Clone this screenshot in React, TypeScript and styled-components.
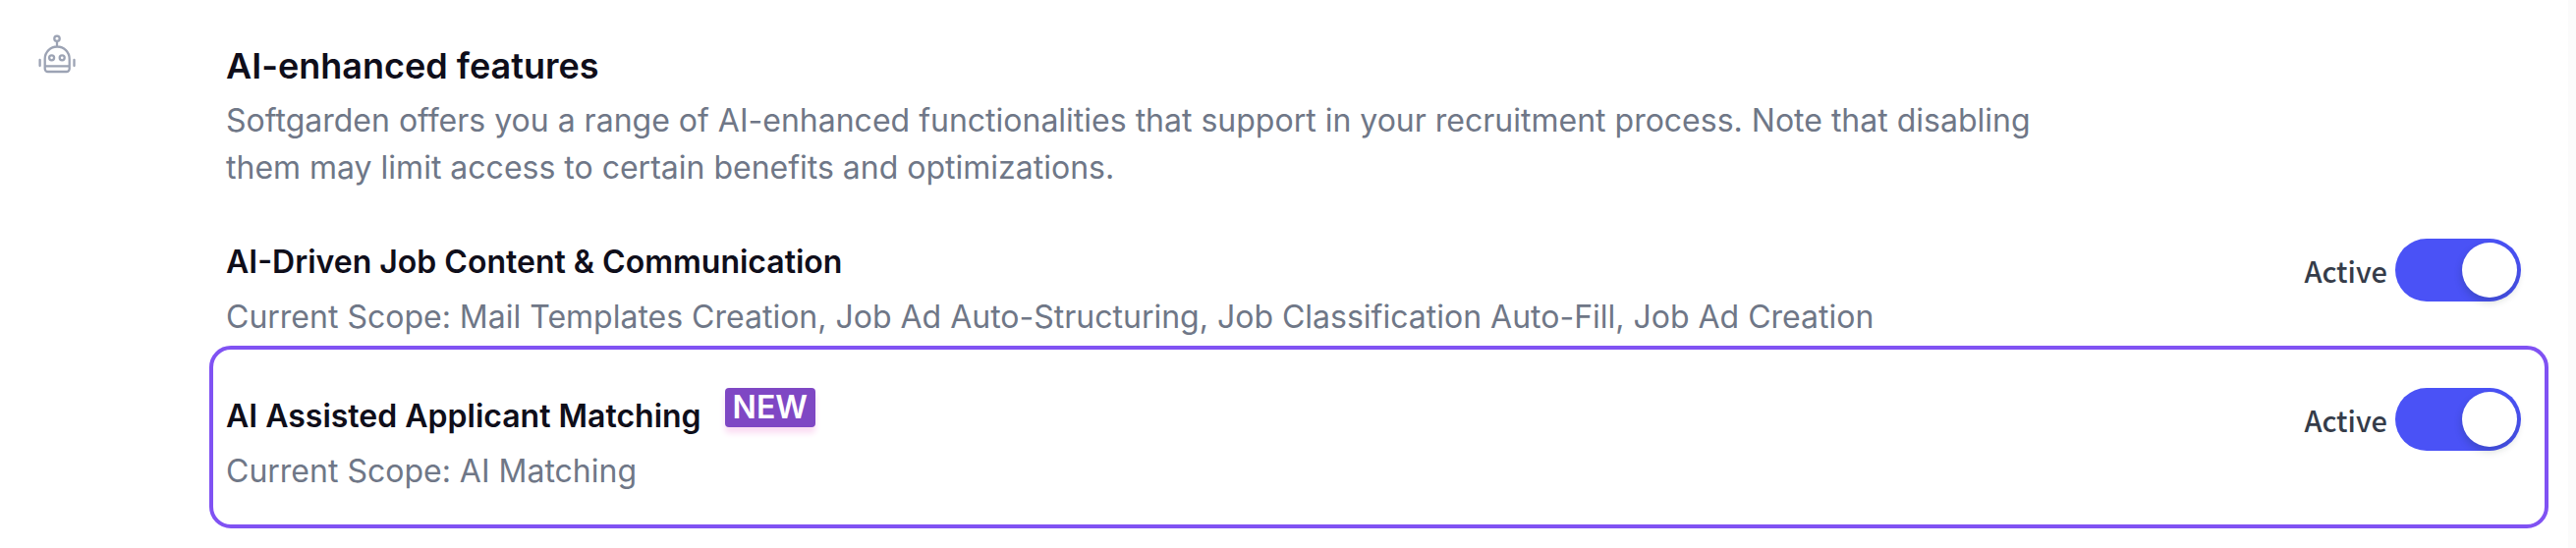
import React, { useId, useState } from "react";
import styled, { createGlobalStyle } from "styled-components";

const GlobalStyle = createGlobalStyle`
  *, *::before, *::after { box-sizing: border-box; }
  body {
    margin: 0;
    background: #ffffff;
    font-family: Inter, "Liberation Sans", sans-serif;
    font-optical-sizing: none;
    font-size: 32px;
    line-height: 48px;
  }
  h2, h3, p { margin: 0; }
`;

const Panel = styled.section`
  display: flex;
  align-items: flex-start;
  min-height: 100vh;
  padding: 32px 20px 20px 36px;
  border-right: 8px solid #fbfbfb;
`;

const IconColumn = styled.div`
  flex: 0 0 177px;
`;

const RobotSvg = styled.svg`
  display: block;
  width: 44px;
  height: 44px;
`;

const Content = styled.div`
  flex: 1;
  min-width: 0;
`;

const Intro = styled.header`
  max-width: 1900px;
  padding: 7px 0 0 17px;
`;

const Heading = styled.h2`
  font-size: 36px;
  font-weight: 600;
  line-height: 56px;
  color: #0f0e1a;
`;

const Description = styled.p`
  margin-top: 4px;
  color: #6f7787;
`;

const Feature = styled.div<{ $highlighted?: boolean }>`
  display: flex;
  justify-content: space-between;
  align-items: flex-start;
  gap: 32px;
  padding: ${(p) => (p.$highlighted ? "39px 24px 30px 13px" : "48px 28px 5px 17px")};
  border: ${(p) => (p.$highlighted ? "4px solid #8052f3" : "0")};
  border-radius: 22px;
`;

const FeatureText = styled.div`
  display: flex;
  flex-direction: column;
  gap: 8px;
`;

const TitleLine = styled.div`
  display: flex;
  align-items: flex-end;
  gap: 24px;
`;

const Title = styled.h3`
  font-size: 32px;
  font-weight: 600;
  line-height: 48px;
  color: #0f0e1a;
`;

const Badge = styled.span`
  margin-bottom: 13px;
  padding: 0 8px;
  border-radius: 4px;
  background: #7f47c4;
  box-shadow: 0 6px 6px #fbdcf3;
  color: #ffffff;
  font-weight: 600;
  line-height: 40px;
`;

const Scope = styled.p`
  color: #6f7787;
`;

const SwitchLabel = styled.label`
  display: flex;
  align-items: center;
  gap: 8px;
  color: #353c49;
  font-family: "Noto Sans CJK JP", "Noto Sans", sans-serif;
  font-size: 29px;
  font-weight: 500;
`;

const Switch = styled.input`
  appearance: none;
  display: flex;
  align-items: center;
  width: 128px;
  height: 64px;
  margin: 0;
  padding: 4px;
  border-radius: 32px;
  background: #c9ced8;
  cursor: pointer;

  &::before {
    content: "";
    width: 56px;
    height: 56px;
    border-radius: 50%;
    background: #ffffff;
    box-shadow: 0 4px 8px rgba(0, 35, 11, 0.2);
  }
  &:checked { background: #4a52f6; justify-content: flex-end; }
`;

function RobotIcon() {
  return (
    <RobotSvg viewBox="0 0 44 44" fill="none" stroke="#9ca3b4" strokeWidth="2.3" strokeLinecap="round" aria-hidden="true">
      <circle cx="22" cy="7.3" r="2.7" />
      <path d="M22 10v5M9.700 28a12.500 12.500 0 0 1 25 0v10a3 3 0 0 1-3 3H12.700a3 3 0 0 1-3-3zM9.700 35.400h25M4.600 29v6M39.500 29v6" />
      <circle cx="16.6" cy="26.8" r="2.5" />
      <circle cx="27.2" cy="26.8" r="2.5" />
    </RobotSvg>
  );
}

interface FeatureRowProps {
  title: string;
  scope: string;
  isNew?: boolean;
}

function FeatureRow({ title, scope, isNew }: FeatureRowProps) {
  const [active, setActive] = useState(true);
  const id = useId();
  return (
    <Feature $highlighted={isNew}>
      <FeatureText>
        <TitleLine>
          <Title>{title}</Title>
          {isNew && <Badge>NEW</Badge>}
        </TitleLine>
        <Scope>{scope}</Scope>
      </FeatureText>
      <SwitchLabel htmlFor={id}>
        {active ? "Active" : "Inactive"}
        <Switch id={id} type="checkbox" role="switch" checked={active} onChange={(e) => setActive(e.target.checked)} />
      </SwitchLabel>
    </Feature>
  );
}

export default function App() {
  return (
    <>
      <GlobalStyle />
      <Panel>
        <IconColumn>
          <RobotIcon />
        </IconColumn>
        <Content>
          <Intro>
            <Heading>AI-enhanced features</Heading>
            <Description>
              Softgarden offers you a range of AI-enhanced functionalities that support in your recruitment process. Note
              that disabling them may limit access to certain benefits and optimizations.
            </Description>
          </Intro>
          <FeatureRow
            title="AI-Driven Job Content & Communication"
            scope="Current Scope: Mail Templates Creation, Job Ad Auto-Structuring, Job Classification Auto-Fill, Job Ad Creation"
          />
          <FeatureRow title="AI Assisted Applicant Matching" scope="Current Scope: AI Matching" isNew />
        </Content>
      </Panel>
    </>
  );
}
